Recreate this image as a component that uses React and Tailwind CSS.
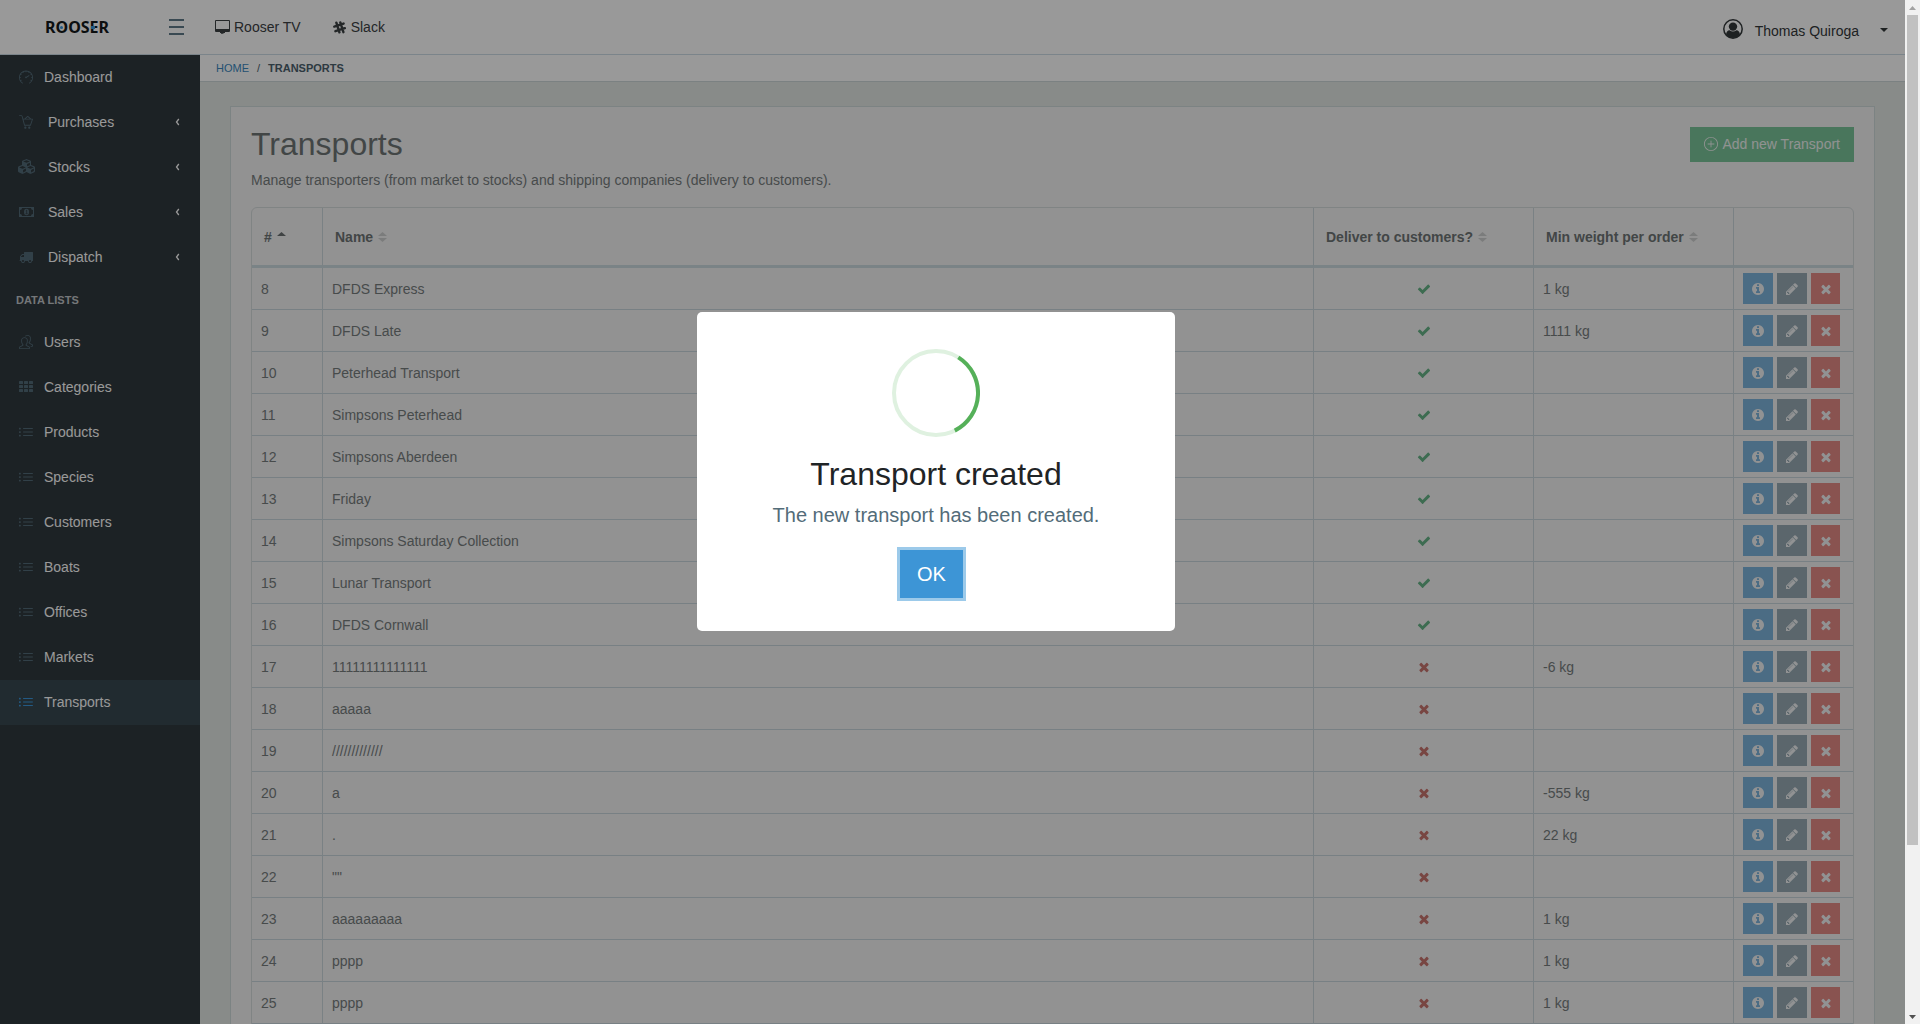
import React from "react";
import { SlSpeedometer, SlPeople, SlList, SlBasketLoaded, SlPlus } from "react-icons/sl";
import { FaCubes } from "react-icons/fa";

const INFO = "M1152 1376v-160q0-14-9-23t-23-9h-96v-512q0-14-9-23t-23-9h-320q-14 0-23 9t-9 23v160q0 14 9 23t23 9h96v320h-96q-14 0-23 9t-9 23v160q0 14 9 23t23 9h448q14 0 23-9t9-23zm-128-896v-160q0-14-9-23t-23-9h-192q-14 0-23 9t-9 23v160q0 14 9 23t23 9h192q14 0 23-9t9-23zm640 416q0 209-103 385.5t-279.5 279.5-385.5 103-385.5-103-279.5-279.5-103-385.5 103-385.5 279.5-279.5 385.5-103 385.5 103 279.5 279.5 103 385.5z";
const PENCIL = "M491 1536l91-91-235-235-91 91v107h128v128h107zm523-928q0-22-22-22-10 0-17 7l-542 542q-7 7-7 17 0 22 22 22 10 0 17-7l542-542q7-7 7-17zm-54-192l416 416-832 832h-416v-416zm683 96q0 53-37 90l-166 166-416-416 166-165q36-38 90-38 53 0 91 38l235 234q37 39 37 91z";
const TIMES = "M1490 1322q0 40-28 68l-136 136q-28 28-68 28t-68-28l-294-294-294 294q-28 28-68 28t-68-28l-136-136q-28-28-28-68t28-68l294-294-294-294q-28-28-28-68t28-68l136-136q28-28 68-28t68 28l294 294 294-294q28-28 68-28t68 28l136 136q28 28 28 68t-28 68l-294 294 294 294q28 28 28 68z";
const CHECK = "M1671 566q0 40-28 68l-724 724-136 136q-28 28-68 28t-68-28l-136-136-362-362q-28-28-28-68t28-68l136-136q28-28 68-28t68 28l294 295 656-657q28-28 68-28t68 28l136 136q28 28 28 68z";
const TRUCK = "M640 1408q0-52-38-90t-90-38-90 38-38 90 38 90 90 38 90-38 38-90zm-384-512h384v-256h-158q-13 0-22 9l-195 195q-9 9-9 22v30zm1280 512q0-52-38-90t-90-38-90 38-38 90 38 90 90 38 90-38 38-90zm256-1088v1024q0 15-4 26.5t-13.5 18.5-16.5 11.5-23.5 6-22.5 2-25.500 0-22.500-.5q0 106-75 181t-181 75-181-75-75-181h-384q0 106-75 181t-181 75-181-75-75-181h-64q-3 0-22.500.5t-25.500 0-22.500-2-23.500-6-16.500-11.500-13.500-18.500-4-26.500q0-26 19-45t45-19v-320q0-8-.5-35t0-38 2.500-34.500 6.500-37 14-30.500 22.500-30l198-198q19-19 50.500-32t58.500-13h160v-192q0-26 19-45t45-19h1024q26 0 45 19t19 45z";

function Glyph({ d, className = "size-3.5" }) {
  return (
    <svg viewBox="0 0 1792 1792" fill="currentColor" className={className} aria-hidden="true">
      <path d={d} />
    </svg>
  );
}

function Money() {
  return (
    <svg viewBox="0 0 15 14" className="h-3.5 w-[15px] shrink-0" aria-hidden="true">
      <path fill="currentColor" fillRule="evenodd" d="M0 2h15v10H0zM3 3a2 2 0 0 1-2 2v4a2 2 0 0 1 2 2h9a2 2 0 0 1 2-2V5a2 2 0 0 1-2-2z" />
      <ellipse cx="7.5" cy="7" rx="2.5" ry="3.2" fill="currentColor" />
      <path d="M6.800 5.800l.9-.6v3.300M6.600 8.700h2" fill="none" stroke="#30393e" strokeWidth=".8" />
    </svg>
  );
}

function Grid() {
  return (
    <svg viewBox="0 0 14 14" fill="currentColor" className="size-3.5" aria-hidden="true">
      {[1, 5, 9].map((y) => [0, 5, 10].map((x) => <rect key={`${x}-${y}`} x={x} y={y} width="4" height="3" rx=".6" />))}
    </svg>
  );
}

function Chevron() {
  return (
    <svg viewBox="0 0 5 8" className="ml-auto h-2 w-[5px] text-white" aria-hidden="true">
      <path d="M3.800 1L1.500 4l2.300 3" fill="none" stroke="currentColor" strokeWidth="1.3" />
    </svg>
  );
}

const groups = [
  ["Purchases", <SlBasketLoaded />],
  ["Stocks", <FaCubes className="size-[17px] shrink-0" />],
  ["Sales", <Money />],
  ["Dispatch", <Glyph d={TRUCK} />],
];

const lists = [
  ["Users", <SlPeople />],
  ["Categories", <Grid />],
  ["Products", <SlList />],
  ["Species", <SlList />],
  ["Customers", <SlList />],
  ["Boats", <SlList />],
  ["Offices", <SlList />],
  ["Markets", <SlList />],
  ["Transports", <SlList />],
];

const rows = [
  [8, "DFDS Express", true, "1 kg"],
  [9, "DFDS Late", true, "1111 kg"],
  [10, "Peterhead Transport", true, ""],
  [11, "Simpsons Peterhead", true, ""],
  [12, "Simpsons Aberdeen", true, ""],
  [13, "Friday", true, ""],
  [14, "Simpsons Saturday Collection", true, ""],
  [15, "Lunar Transport", true, ""],
  [16, "DFDS Cornwall", true, ""],
  [17, "11111111111111", false, "-6 kg"],
  [18, "aaaaa", false, ""],
  [19, "/////////////", false, ""],
  [20, "a", false, "-555 kg"],
  [21, ".", false, "22 kg"],
  [22, '""', false, ""],
  [23, "aaaaaaaaa", false, "1 kg"],
  [24, "pppp", false, "1 kg"],
  [25, "pppp", false, "1 kg"],
];

function NavItem({ label, icon, group, active }) {
  return (
    <li>
      <a
        href="#"
        className={`flex h-[45px] items-center pr-5 pb-0.5 pl-[19px] text-white ${active ? "bg-[#374850]" : ""} ${group ? "gap-[15px]" : "gap-[11px]"}`}
      >
        <span className={`flex w-3.5 shrink-0 items-center justify-center ${active ? "text-[#3b97dc]" : "text-[#536c79]"}`}>{icon}</span>
        <span>{label}</span>
        {group && <Chevron />}
      </a>
    </li>
  );
}

function Sort({ active }) {
  return (
    <svg viewBox="0 0 9 10" className={`h-2.5 w-[9px] ${active ? "text-[#6b7172]" : "text-[#cdcfcf]"}`} aria-hidden="true">
      <path d="M4.500 0L9 4H0z" fill="currentColor" />
      {!active && <path d="M4.500 10L9 6H0z" fill="currentColor" />}
    </svg>
  );
}

function Head({ label, active, className }) {
  return (
    <th className={`h-[60px] border-b-[3px] border-l border-b-[#cbdae0] border-l-[#cbd7dc] px-3 text-left align-middle first:border-l-0 ${className}`}>
      <button className="flex items-center gap-[5px] font-bold text-[#6f7576]">
        {label} <Sort active={active} />
      </button>
    </th>
  );
}

function Header() {
  return (
    <header className="flex h-[55px] shrink-0 items-center border-b border-[#cddde6] bg-white text-[#3c4144]">
      <a href="#" aria-label="Rooser" className="relative ml-[45px] w-[66px] font-['Noto_Sans'] text-base leading-none font-bold text-[#15191b]">
        ROOSER
        <span className="absolute top-[7px] left-[15px] size-[3px] rounded-full bg-[#3b97dc]" />
        <span className="absolute top-[7px] left-[46px] h-[3px] w-1 bg-[#3b97dc]" />
      </a>
      <button aria-label="Toggle menu" className="ml-[58px] flex w-[15px] flex-col gap-[5px]">
        <span className="h-0.5 bg-[#5f7a89]" />
        <span className="h-0.5 bg-[#5f7a89]" />
        <span className="h-0.5 bg-[#5f7a89]" />
      </button>
      <nav className="ml-[31px] flex items-center">
        <a href="#" className="flex items-center gap-1">
          <svg viewBox="0 0 15 14" className="h-3.5 w-[15px]" fill="currentColor" aria-hidden="true">
            <path fillRule="evenodd" d="M1 0h13q1 0 1 1v10q0 1-1 1H10v1H8.500v.8H6V13H5v-1H1q-1 0-1-1V1q0-1 1-1zM1 1v8h13V1z" />
          </svg>
          Rooser TV
        </a>
        <a href="#" className="ml-8 flex items-center gap-[5px]">
          <svg viewBox="0 0 14 14" className="size-[13px]" fill="none" stroke="currentColor" strokeWidth="2.6" strokeLinecap="round" aria-hidden="true">
            <path d="M3.600 1.800l3.300 10.400M7.900 1.600l3.300 10.400M1.400 6L11.400 2.800M2.600 11L12.800 7.700" />
          </svg>
          Slack
        </a>
      </nav>
      <button className="mr-[17px] ml-auto flex items-center text-[#33383a]">
        <svg viewBox="0 0 20 20" className="mt-1 mr-3 size-5" aria-hidden="true">
          <circle cx="10" cy="10" r="9.200" fill="none" stroke="currentColor" strokeWidth="1.5" />
          <circle cx="10" cy="7.600" r="4.200" fill="currentColor" />
          <path d="M3 15.500q.5-4 3.600-4.200 3.400 2.400 6.800 0 3.100.2 3.600 4.200Q14.500 19 10 19T3 15.500z" fill="currentColor" />
        </svg>
        <span className="mt-[7px]">Thomas Quiroga</span>
        <svg viewBox="0 0 8 4" className="mt-[5px] ml-[21px] h-1 w-2" aria-hidden="true">
          <path d="M0 0h8L4 4z" fill="currentColor" />
        </svg>
      </button>
    </header>
  );
}

function Sidebar() {
  return (
    <aside className="w-[200px] shrink-0 bg-[#30393e]">
      <ul>
        <NavItem label="Dashboard" icon={<SlSpeedometer />} />
        {groups.map(([label, icon]) => (
          <NavItem key={label} label={label} icon={icon} group />
        ))}
      </ul>
      <h2 className="flex h-10 items-center px-4 pt-0.5 text-[11px] font-bold text-[#c2c7ca]">DATA LISTS</h2>
      <ul>
        {lists.map(([label, icon]) => (
          <NavItem key={label} label={label} icon={icon} active={label === "Transports"} />
        ))}
      </ul>
    </aside>
  );
}

function Cell({ children, className = "px-[9px]" }) {
  return (
    <td className={`h-[42px] border-b border-l border-b-[#c8d6dc] border-l-[#cbd7dc] first:border-l-0 ${className}`}>{children}</td>
  );
}

function TransportsTable() {
  return (
    <div className="mt-[17px] overflow-hidden rounded-t-md border border-[#d6dcdd]">
      <table className="w-full table-fixed border-separate border-spacing-0">
        <thead>
          <tr>
            <Head label="#" active className="w-[70px]" />
            <Head label="Name" />
            <Head label="Deliver to customers?" className="w-[220px]" />
            <Head label="Min weight per order" className="w-[200px]" />
            <th className="w-[120px] border-b-[3px] border-l border-b-[#cbdae0] border-l-[#cbd7dc]" aria-label="Actions" />
          </tr>
        </thead>
        <tbody>
          {rows.map(([id, name, ok, weight]) => (
            <tr key={id}>
              <Cell>{id}</Cell>
              <Cell>{name}</Cell>
              <Cell className="px-0">
                <Glyph d={ok ? CHECK : TIMES} className={`mx-auto size-3.5 ${ok ? "text-[#66b487]" : "text-[#c9756f]"}`} />
              </Cell>
              <Cell>{weight}</Cell>
              <Cell className="px-0">
                <div className="flex gap-1 pl-[9px] text-[#f2f4f5]">
                  <button aria-label="Details" className="flex h-[31px] w-[30px] items-center justify-center bg-[#7db4dc]">
                    <Glyph d={INFO} />
                  </button>
                  <button aria-label="Edit" className="flex h-[31px] w-[30px] items-center justify-center bg-[#98abb5]">
                    <Glyph d={PENCIL} />
                  </button>
                  <button aria-label="Delete" className="flex h-[31px] w-[29px] items-center justify-center bg-[#e58a85]">
                    <Glyph d={TIMES} />
                  </button>
                </div>
              </Cell>
            </tr>
          ))}
        </tbody>
      </table>
    </div>
  );
}

function Dialog() {
  return (
    <div className="absolute inset-0 flex items-start justify-center bg-black/40 pt-[312px] pr-[33px]">
      <div role="dialog" aria-labelledby="dialog-title" className="flex w-[478px] flex-col items-center rounded-[5px] bg-white pt-[37px] pb-[33px]">
        <svg viewBox="0 0 88 88" className="size-[88px]" fill="none" strokeWidth="4" aria-hidden="true">
          <circle cx="44" cy="44" r="42" stroke="#dff1e0" />
          <path d="M66.300 8.400A42 42 0 0 1 62.800 81.600" stroke="#55b059" />
        </svg>
        <h2 id="dialog-title" className="mt-[17px] text-[32px] leading-10 text-[#1f2426]">Transport created</h2>
        <p className="mt-[9px] text-xl leading-6 text-[#536c79]">The new transport has been created.</p>
        <button className="mt-[23px] mr-[9px] h-12 w-[63px] bg-[#3d95d6] text-xl text-white ring-3 ring-[#9ccaea]">OK</button>
      </div>
    </div>
  );
}

function ScrollBar() {
  return (
    <div className="flex w-[15px] shrink-0 flex-col items-center bg-[#f1f1f1]" aria-hidden="true">
      <svg viewBox="0 0 15 15" className="size-[15px]">
        <path d="M4 10h7L7.500 6z" fill="#a3a3a3" />
      </svg>
      <div className="w-[11px] flex-[830] bg-[#c1c1c1]" />
      <div className="flex-[164]" />
      <svg viewBox="0 0 15 15" className="size-[15px]">
        <path d="M4 6h7l-3.500 4z" fill="#505050" />
      </svg>
    </div>
  );
}

export default function App() {
  return (
    <div className="flex h-screen overflow-hidden font-['Liberation_Sans',Arial,sans-serif] text-sm">
      <div className="relative flex min-w-0 flex-1 flex-col overflow-hidden">
        <Header />
        <div className="flex min-h-0 flex-1">
          <Sidebar />
          <div className="min-w-0 flex-1 bg-[#e3e8e5]">
            <nav aria-label="Breadcrumb" className="flex h-[27px] items-center gap-2 border-b border-[#cdd8d9] bg-white px-4 pt-px text-[11px] text-[#4b616d]">
              <a href="#" className="text-[#3b87be]">HOME</a>
              <span>/</span>
              <span className="font-bold">TRANSPORTS</span>
            </nav>
            <main className="mx-[30px] mt-6 border border-[#cfdadb] bg-[#f3f3f3] p-5 text-[#777d7e]">
              <div className="flex items-start justify-between">
                <h1 className="text-[32px] leading-[34px] text-[#6f7676]">Transports</h1>
                <button className="flex h-[35px] items-center gap-1 bg-[#7bc59a] px-3.5 pb-px text-[#f0f4f2]">
                  <SlPlus />
                  Add new Transport
                </button>
              </div>
              <p className="mt-2 leading-5">Manage transporters (from market to stocks) and shipping companies (delivery to customers).</p>
              <TransportsTable />
            </main>
          </div>
        </div>
        <Dialog />
      </div>
      <ScrollBar />
    </div>
  );
}
